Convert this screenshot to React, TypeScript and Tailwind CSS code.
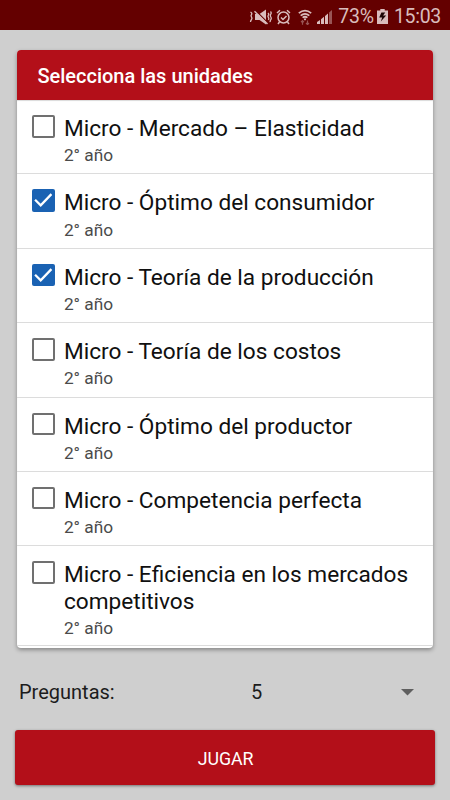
import React from "react";
import clsx from "clsx";

interface Unit {
    title: string;
    year: string;
    checked?: boolean;
}

const UNITS: Unit[] = [
    { title: "Micro - Mercado – Elasticidad", year: "2° año" },
    { title: "Micro - Óptimo del consumidor", year: "2° año", checked: true },
    { title: "Micro - Teoría de la producción", year: "2° año", checked: true },
    { title: "Micro - Teoría de los costos", year: "2° año" },
    { title: "Micro - Óptimo del productor", year: "2° año" },
    { title: "Micro - Competencia perfecta", year: "2° año" },
    { title: "Micro - Eficiencia en los mercados competitivos", year: "2° año" },
];

function MuteIcon() {
    return (
        <svg width="23" height="16" viewBox="0 0 23 16" fill="none" stroke="currentColor" strokeWidth="1.3">
            <path d="M6 5h4.500l6.500-4.500v15L10.500 11H6z" fill="currentColor" stroke="none" />
            <path d="M7 2l12 12" stroke="#640000" strokeWidth="1.3" />
            <path d="M5.500 2.200L18.500 15" strokeWidth="1.5" />
            <path d="M1.500 3q2 1.200 1 2.500t0 2.500 0 2.500-1 2.500" />
            <path d="M19 4q1.200 1.200.4 2.200t0 2.200 0 2.600M21.500 2.500q1.200 1.300.3 2.700t0 2.800 0 2.700-.6 2.500" />
        </svg>
    );
}

function AlarmIcon() {
    return (
        <svg width="15" height="16" viewBox="0 0 15 16" fill="none" stroke="currentColor" strokeWidth="1.5">
            <circle cx="7.500" cy="8.500" r="5.500" />
            <path d="M1 4l3-2.700M14 4l-3-2.700M3.500 13l-1.500 2M11.500 13l1.500 2" />
            <path d="M5 8.500l2 2 3.500-3.500" />
        </svg>
    );
}

function WifiIcon() {
    return (
        <svg width="14" height="16" viewBox="0 0 14 16" fill="none" stroke="currentColor" strokeWidth="1.7">
            <path d="M.8 4.200q6.200-5.200 12.400 0M2.700 6.600q4.300-3.600 8.600 0M4.600 8.700q2.400-1.900 4.800 0" />
            <circle cx="7" cy="10.300" r="1.100" fill="currentColor" stroke="none" />
            <path d="M4.500 15.700v-4M3 13.200l1.500-1.600L6 13.200M9.500 11.500v4M8 14l1.500 1.600L11 14" strokeWidth="1.2" opacity=".45" />
        </svg>
    );
}

function SignalIcon() {
    return (
        <svg width="16" height="15" viewBox="0 0 16 15" fill="currentColor">
            <path d="M0 15v-2l3-2v4zM4 15v-4.800l3-2.400V15zM8 15V7l3-2.500V15z" />
            <path d="M12 15V3.500L15 1v14z" opacity=".45" />
        </svg>
    );
}

function BatteryIcon() {
    return (
        <svg width="11" height="15" viewBox="0 0 10 15" preserveAspectRatio="none">
            <path d="M0 1.500h3V0h4v1.500h3V15H0z" fill="currentColor" />
            <path d="M4 3.500L2 8.500h2.700L3.500 12.500 8.300 6.500H5.500L7.500 3.500z" fill="#1c0505" />
        </svg>
    );
}

function StatusBar() {
    return (
        <header className="h-[30px] bg-[#640000] text-[#d9bcbc]">
            <div className="flex h-full items-center justify-end pr-[9px] pt-[3px] text-[19.5px] leading-none">
                <MuteIcon />
                <span className="ml-[4px]"><AlarmIcon /></span>
                <span className="ml-[7px]"><WifiIcon /></span>
                <span className="ml-[5px]"><SignalIcon /></span>
                <span className="ml-[5px] tracking-[-0.2px]">73%</span>
                <span className="ml-[3px]"><BatteryIcon /></span>
                <span className="ml-[6px] tracking-[-0.3px]">15:03</span>
            </div>
        </header>
    );
}

function Checkbox({ checked }: { checked?: boolean }) {
    return (
        <span
            className={clsx(
                "block size-[22.5px] shrink-0 rounded-[2px]",
                checked ? "bg-[#1a62b3]" : "border-2 border-[#707070]"
            )}
        >
            {checked && (
                <svg className="size-full" viewBox="0 0 22 22" fill="none" stroke="white" strokeWidth="2.2">
                    <path d="M3 10.500l5.500 5.500L19 5" />
                </svg>
            )}
        </span>
    );
}

function UnitRow({ unit }: { unit: Unit }) {
    return (
        <li className="flex min-h-[74.4px] border-b border-[#dcdcdc] pl-[15px] pt-[15px]">
            <Checkbox checked={unit.checked} />
            <div className="ml-[9px] pb-[7px] pt-px">
                <p className="text-[22.65px] leading-[26.4px] text-[#101010]">{unit.title}</p>
                <p className="mt-[2.8px] text-[17.3px] leading-[20px] text-[#4b4b4b]">{unit.year}</p>
            </div>
        </li>
    );
}

export default function App() {
    return (
        <div className="flex h-[800px] w-[450px] flex-col overflow-hidden bg-[#cfcfcf] font-['Roboto',sans-serif]">
            <StatusBar />
            <main className="flex flex-1 flex-col px-[15px] pt-5">
                <section className="ml-[2.4px] mr-[2px] h-[598px] overflow-hidden rounded-[4px] bg-white shadow-[0_2px_4px_rgba(0,0,0,0.35)]">
                    <h1 className="flex h-[50px] items-center bg-[#b30f19] pl-5 pt-[2px] text-[20px] font-medium text-white">
                        Selecciona las unidades
                    </h1>
                    <ul className="shadow-[inset_0_1px_1px_rgba(0,0,0,0.15)]">
                        {UNITS.map((unit) => (
                            <UnitRow key={unit.title} unit={unit} />
                        ))}
                    </ul>
                </section>
                <div className="flex h-[82px] items-center pl-1 pt-[6px] text-[20px] text-[#1c1c1c]">
                    <span className="w-[232px]">Preguntas:</span>
                    <span>5</span>
                    <svg className="ml-auto mr-[21px]" width="13" height="7" viewBox="0 0 13 7" fill="#5f5f5f">
                        <path d="M0 0h13L6.500 6.500z" />
                    </svg>
                </div>
                <button className="h-[55px] rounded-[3px] bg-[#b30f19] pl-px pt-[3px] text-[17.8px] tracking-[-0.1px] text-white shadow-[0_1px_3px_rgba(0,0,0,0.45)]">
                    JUGAR
                </button>
            </main>
        </div>
    );
}
